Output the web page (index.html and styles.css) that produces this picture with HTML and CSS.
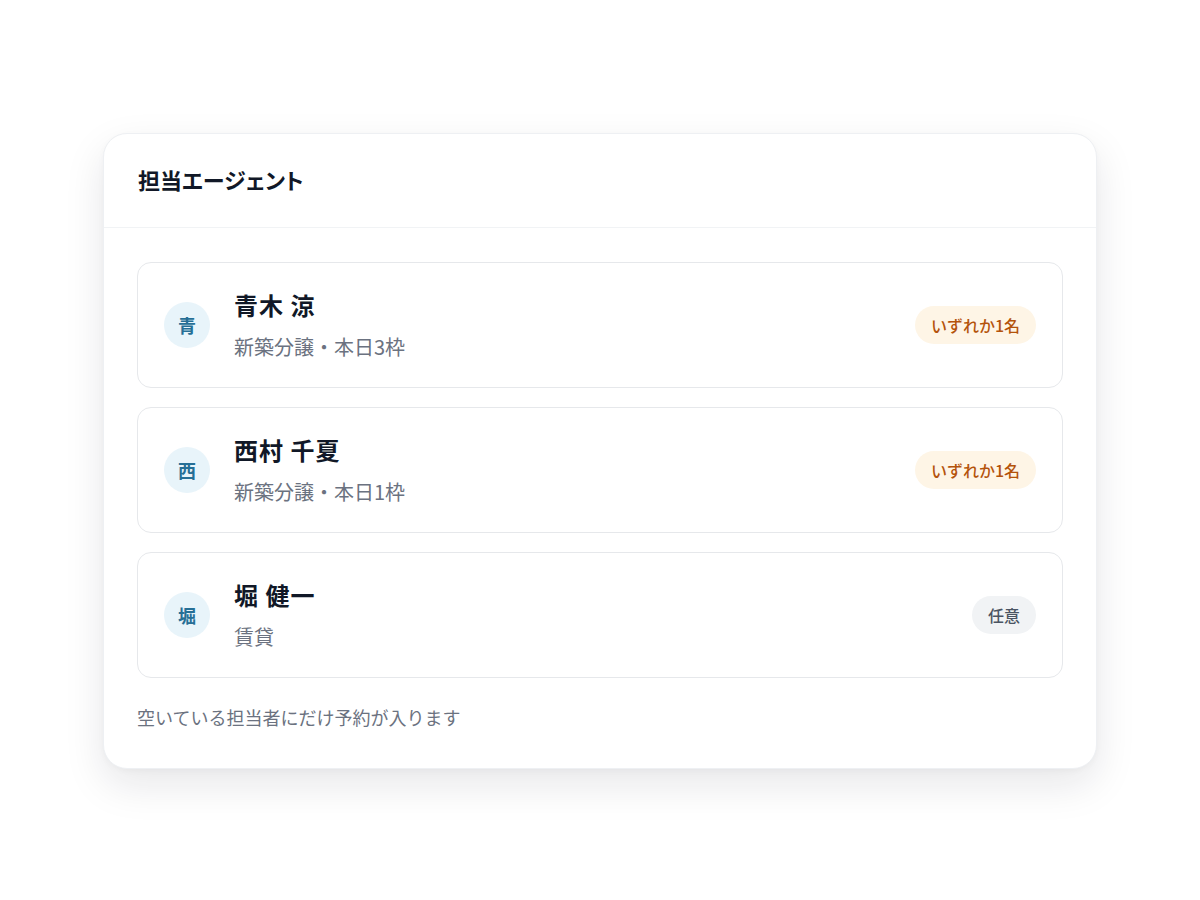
FILE: index.html
```html
<!DOCTYPE html>
<html lang="ja">
<head>
    <meta charset="UTF-8">
    <meta name="viewport" content="width=device-width, initial-scale=1.0">
    <title>担当エージェント</title>
    <link rel="stylesheet" href="styles.css">
</head>
<body>
    <div class="agent-card">
        <div class="agent-card-header">
            <h2 class="agent-card-title">担当エージェント</h2>
        </div>
        <div class="agent-card-body">
            <div class="agent-list">
                <div class="agent-item">
                    <div class="avatar">青</div>
                    <div class="agent-info">
                        <p class="agent-name">青木 涼</p>
                        <p class="agent-meta">新築分譲・本日3枠</p>
                    </div>
                    <span class="badge badge-any">いずれか1名</span>
                </div>
                <div class="agent-item">
                    <div class="avatar">西</div>
                    <div class="agent-info">
                        <p class="agent-name">西村 千夏</p>
                        <p class="agent-meta">新築分譲・本日1枠</p>
                    </div>
                    <span class="badge badge-any">いずれか1名</span>
                </div>
                <div class="agent-item">
                    <div class="avatar">堀</div>
                    <div class="agent-info">
                        <p class="agent-name">堀 健一</p>
                        <p class="agent-meta">賃貸</p>
                    </div>
                    <span class="badge badge-optional">任意</span>
                </div>
            </div>
            <p class="agent-note">空いている担当者にだけ予約が入ります</p>
        </div>
    </div>
</body>
</html>
```

FILE: styles.css
```css
* {
    margin: 0;
    padding: 0;
    box-sizing: border-box;
}

body {
    font-family: "Noto Sans CJK JP", "Noto Sans", sans-serif;
    background: #ffffff;
    color: #111827;
    min-height: 100vh;
    padding: 133px 103px 0;
}

.agent-card {
    width: 994px;
    background: #ffffff;
    border: 1px solid #eef0f3;
    border-radius: 24px;
    box-shadow: 0 16px 40px rgba(15, 23, 42, 0.1), 0 2px 6px rgba(15, 23, 42, 0.03);
}

.agent-card-header {
    height: 94px;
    padding: 0 34px;
    display: flex;
    align-items: center;
    border-bottom: 1px solid #f1f3f5;
}

.agent-card-title {
    font-size: 22px;
    font-weight: 700;
    line-height: 30px;
    margin-top: -4px;
    color: #111827;
    font-feature-settings: "palt";
}

.agent-card-body {
    padding: 34px 33px 38px;
}

.agent-list {
    display: flex;
    flex-direction: column;
    gap: 19px;
}

.agent-item {
    height: 126px;
    display: flex;
    align-items: center;
    gap: 24px;
    padding: 0 26px;
    border: 1px solid #e6e8eb;
    border-radius: 14px;
}

.avatar {
    width: 46px;
    height: 46px;
    border-radius: 50%;
    background: #e8f4fa;
    color: #266f96;
    font-size: 18px;
    font-weight: 700;
    display: flex;
    align-items: center;
    justify-content: center;
    flex-shrink: 0;
}

.agent-info {
    flex: 1;
}

.agent-name {
    font-size: 24px;
    font-weight: 700;
    line-height: 30px;
    color: #111827;
    letter-spacing: 1px;
}

.agent-meta {
    margin-top: 14px;
    font-size: 20px;
    line-height: 26px;
    color: #6b7280;
}

.badge {
    height: 38px;
    padding: 0 16px;
    border-radius: 19px;
    display: flex;
    align-items: center;
    font-size: 16px;
    font-weight: 500;
}

.badge-any {
    background: #fef5e6;
    color: #b4530b;
}

.badge-optional {
    background: #f1f3f5;
    color: #4b5563;
}

.agent-note {
    margin-top: 26px;
    font-size: 18px;
    line-height: 26px;
    color: #6b7280;
}
```
